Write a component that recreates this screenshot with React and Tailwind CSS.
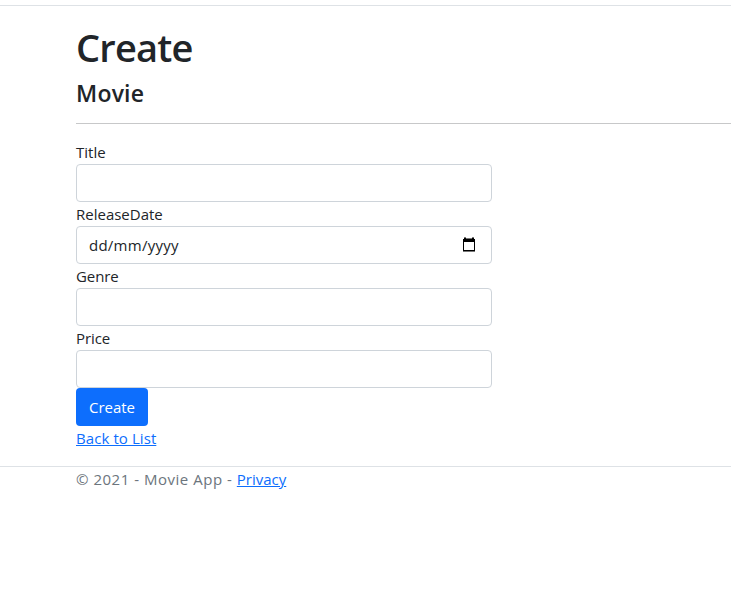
import React from "react";

const fieldClass =
  "block h-[38px] w-full rounded border border-[#ced4da] bg-white px-3 text-[#212529] outline-none";

function CalendarIcon() {
  return (
    <svg width="12" height="15" viewBox="0 0 12 15" shapeRendering="crispEdges" aria-hidden="true">
      <path fill="#777" d="M1 0h2v1H1zM9 0h2v1H9zM3 1h6v1H3zM0 14h12v1H0z" />
      <path fill="#000" fillRule="evenodd" d="M1 1h2v1h6V1h2v1h1v12H0V2h1zM1 5v8h10V5z" />
    </svg>
  );
}

function Label({ id, className, children }) {
  return (
    <label htmlFor={id} className="flex h-6 items-center">
      <span className={className}>{children}</span>
    </label>
  );
}

export default function App() {
  return (
    <div className="h-[592px] overflow-hidden bg-white font-['Segoe_UI','Open_Sans','Noto_Sans',sans-serif] text-[15px] leading-6 text-[#212529]">
      <header className="h-1.5 border-b border-[#dee2e6]" />
      <main className="pt-4 pl-[76px]">
        <h1 className="mb-2 h-12 text-[38px] leading-[51px] font-semibold tracking-[-0.8px]">Create</h1>
        <h4 className="h-[29px] text-[23px] leading-[31px] font-semibold tracking-[0.2px]">Movie</h4>
        <hr className="mt-4 mb-4 border-[#c7c8c9]" />
        <form className="w-[416px]" onSubmit={(e) => e.preventDefault()}>
          <Label id="title">Title</Label>
          <input id="title" className={fieldClass} />
          <Label id="date">ReleaseDate</Label>
          <div id="date" className={fieldClass}>
            <div className="flex h-[35px] items-center justify-between pr-1">
              <span className="pt-px tracking-[0.25px]">dd/mm/yyyy</span>
              <CalendarIcon />
            </div>
          </div>
          <Label id="genre" className="tracking-[-0.1px]">Genre</Label>
          <input id="genre" className={fieldClass} />
          <Label id="price" className="tracking-[-0.1px]">Price</Label>
          <input id="price" className={fieldClass} />
          <button className="block h-[38px] w-[72px] rounded bg-[#0d6efd] text-center text-white">Create</button>
        </form>
        <div className="h-10">
          <a href="#list" className="tracking-[0.08px] text-[#0d6efd] underline">Back to List</a>
        </div>
      </main>
      <footer className="border-t border-[#dee2e6] pl-[76px] whitespace-pre text-[#6c757d]">
        <span className="tracking-[0.52px]">© 2021 - Movie App - </span>
        <a href="#privacy" className="text-[#0d6efd] underline">Privacy</a>
      </footer>
    </div>
  );
}
